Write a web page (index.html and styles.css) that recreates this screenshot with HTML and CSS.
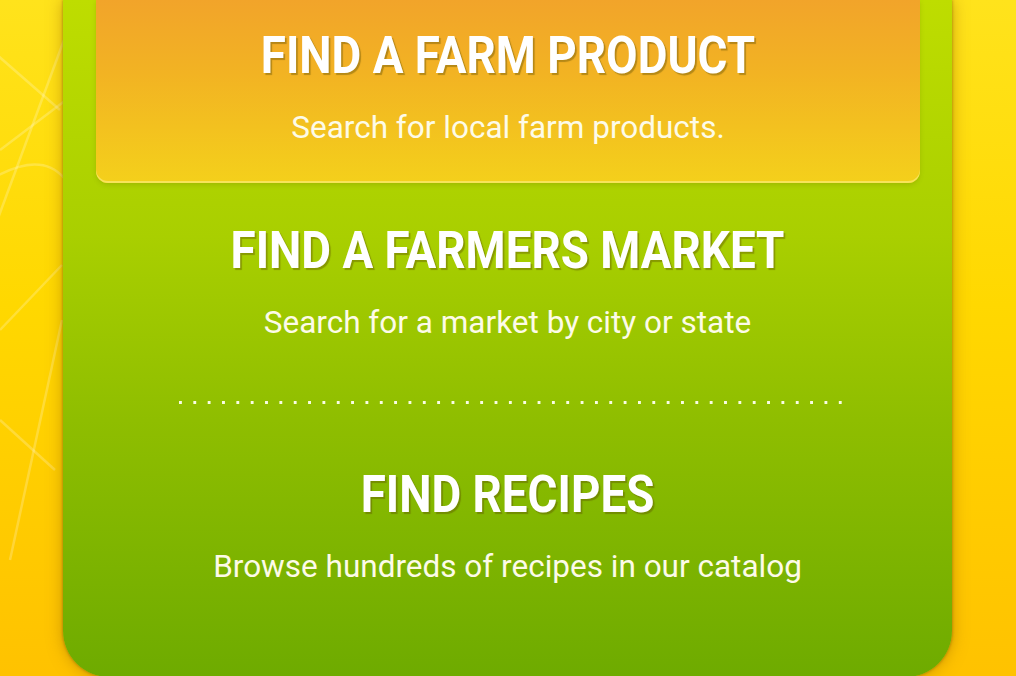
FILE: index.html
```html
<!DOCTYPE html>
<html lang="en">
<head>
    <meta charset="UTF-8">
    <meta name="viewport" content="width=device-width, initial-scale=1.0">
    <title>Farm Finder</title>
    <link rel="stylesheet" href="styles.css">
</head>
<body>
    <svg class="bg-lines" viewBox="0 0 1016 676" preserveAspectRatio="none" aria-hidden="true">
        <path d="M-20 40 L60 110" />
        <path d="M0 150 L66 100" />
        <path d="M-10 240 L64 40" />
        <path d="M0 330 L62 265" />
        <path d="M-10 180 Q40 150 64 178" />
        <path d="M10 560 L62 320" />
        <path d="M0 420 L55 470" />
    </svg>

    <main class="panel">
        <section class="option option-featured">
            <h2 class="option-title">FIND A FARM PRODUCT</h2>
            <p class="option-text">Search for local farm products.</p>
        </section>

        <section class="option">
            <h2 class="option-title">FIND A FARMERS MARKET</h2>
            <p class="option-text">Search for a market by city or state</p>
        </section>

        <div class="dots"></div>

        <section class="option option-recipes">
            <h2 class="option-title">FIND RECIPES</h2>
            <p class="option-text">Browse hundreds of recipes in our catalog</p>
        </section>
    </main>
</body>
</html>
```

FILE: styles.css
```css
body {
    margin: 0;
    height: 676px;
    overflow: hidden;
    font-family: 'Roboto', 'Liberation Sans', sans-serif;
    background: linear-gradient(to bottom, #ffe31c 0%, #ffd800 45%, #ffc200 100%);
    color: #fff;
}
.bg-lines {
    position: absolute;
    left: 0;
    top: 0;
    width: 1016px;
    height: 676px;
}
.bg-lines path {
    fill: none;
    stroke: rgba(255, 255, 255, 0.22);
    stroke-width: 2.5;
}
.panel {
    position: relative;
    width: 889px;
    margin: 0 0 0 63px;
    padding-bottom: 92px;
    border-radius: 0 0 46px 46px;
    background: linear-gradient(to bottom, #bedd00 0%, #a9cf00 35%, #8fbe00 62%, #6eab00 100%);
    box-shadow: 0 0 3px rgba(110, 80, 0, 0.6), 0 0 16px rgba(150, 100, 0, 0.5);
}
.option {
    text-align: center;
}
.option-featured {
    margin: 0 32px 0 33px;
    padding: 26px 0 37px;
    border-radius: 0 0 12px 12px;
    background: linear-gradient(to bottom, #f2a42a 0%, #f2b323 40%, #f4d01b 100%);
    box-shadow: inset 0 -2px 0 #f7e35a, 0 2px 4px rgba(110, 120, 0, 0.25);
}
.option-featured + .option {
    margin-top: 38px;
}
.option-title {
    margin: 0;
    font-size: 52px;
    line-height: 60px;
    font-weight: 700;
    transform: scaleX(0.88);
    text-shadow: 2px 2px 1px rgba(90, 75, 0, 0.4);
}
.option-text {
    margin: 24px 0 0;
    font-size: 31.5px;
    line-height: 36px;
    font-weight: 400;
    color: #fdfbe8;
}
.dots {
    width: 663px;
    height: 3px;
    margin: 60px auto 0;
    background-image: linear-gradient(to right, rgba(255, 255, 240, 0.95) 3px, transparent 3px);
    background-size: 14.35px 3px;
    position: relative;
    left: 3px;
}
.option-recipes {
    margin-top: 61px;
}
```
